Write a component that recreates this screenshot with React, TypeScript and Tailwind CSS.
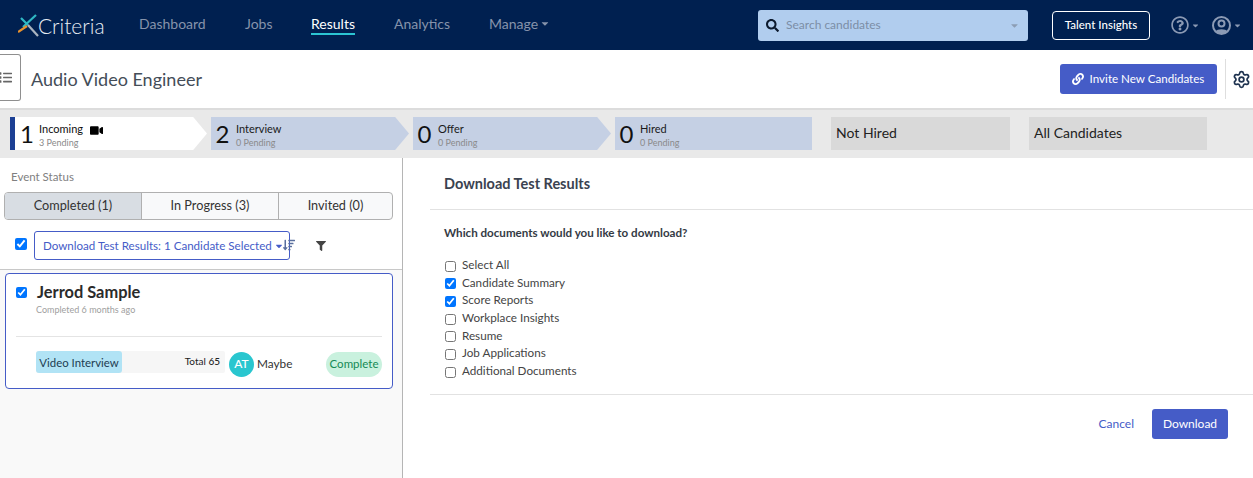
import React from 'react';
import {
  FaCaretDown,
  FaFilter,
  FaLink,
  FaList,
  FaRegQuestionCircle,
  FaSearch,
  FaSortAmountDown,
  FaVideo,
} from 'react-icons/fa';
import { Settings } from 'lucide-react';

const navItems = [
  { label: 'Dashboard', cls: 'w-[106px]' },
  { label: 'Jobs', cls: 'w-[66px]' },
  { label: 'Results', cls: 'w-[83px]', active: true },
  { label: 'Analytics', cls: 'w-[95px]' },
];

const steps = [
  { n: '2', label: 'Interview' },
  { n: '0', label: 'Offer' },
];

const documents = [
  { label: 'Select All', checked: false, h: 'h-[18px]' },
  { label: 'Candidate Summary', checked: true, h: 'h-[17px]' },
  { label: 'Score Reports', checked: true, h: 'h-[18px]' },
  { label: 'Workplace Insights', checked: false, h: 'h-[18px]' },
  { label: 'Resume', checked: false, h: 'h-[17px]' },
  { label: 'Job Applications', checked: false, h: 'h-[18px]' },
  { label: 'Additional Documents', checked: false, h: 'h-[18px]' },
];

function Logo() {
  return (
    <div className="flex items-center w-[139px] pl-[18px]">
      <svg width="21" height="24" viewBox="0 0 21 24" fill="none" className="shrink-0">
        <path d="M5 14 L18 2" stroke="#2fb8c4" strokeWidth="2.2" />
        <path d="M3 5 L10 12" stroke="#2fb8c4" strokeWidth="2.2" />
        <path d="M0 19 L9 13" stroke="#e8912d" strokeWidth="2.2" />
        <path d="M10 12 L20 23" stroke="#aab4c0" strokeWidth="2.2" />
      </svg>
      <span className="text-[21px] font-light text-[#e8eef5] leading-none -ml-[1px]">Criteria</span>
    </div>
  );
}

function UserIcon() {
  return (
    <svg width="19" height="19" viewBox="0 0 19 19" fill="none">
      <circle cx="9.5" cy="9.5" r="8.5" stroke="#8b9ab4" strokeWidth="2" />
      <circle cx="9.5" cy="7.5" r="3" stroke="#8b9ab4" strokeWidth="2" fill="#002050" />
      <path d="M3.5 15.5 C5 12.5 14 12.5 15.5 15.5 L12 18 H7 Z" fill="#8b9ab4" />
    </svg>
  );
}

function Navbar() {
  return (
    <nav className="h-[50px] bg-[#002050] flex items-center shrink-0">
      <Logo />
      <ul className="flex items-center -mt-[1px] text-[14px] text-[#8693ab]">
        {navItems.map((item) => (
          <li key={item.label} className={`flex ${item.cls}`}>
            <span className={item.active ? 'text-white border-b-2 border-[#2cc5d2] leading-[19px]' : 'border-b-2 border-transparent leading-[19px]'}>
              {item.label}
            </span>
          </li>
        ))}
        <li className="flex items-center gap-[3px] w-[60px] pb-[2px] leading-[19px]">
          Manage
          <FaCaretDown className="text-[11px]" />
        </li>
      </ul>
      <div className="ml-[209px] w-[270px] h-[31px] bg-[#b1cdee] rounded-[3px] flex items-center pl-[8px] pr-[8px]">
        <FaSearch className="text-[13px] text-[#0c1a2e]" />
        <span className="ml-[7px] text-[12px] text-[#7c8ea6] flex-1">Search candidates</span>
        <FaCaretDown className="text-[11px] text-[#8c9db4]" />
      </div>
      <button className="ml-[24px] w-[98px] h-[29px] border border-white rounded-[4px] text-white text-[11.5px] font-medium">
        Talent Insights
      </button>
      <div className="ml-[21px] flex items-center gap-[2px] text-[#8b9ab4]">
        <FaRegQuestionCircle className="text-[18px]" />
        <FaCaretDown className="text-[9px]" />
      </div>
      <div className="ml-[12px] flex items-center gap-[2px] text-[#8b9ab4]">
        <UserIcon />
        <FaCaretDown className="text-[9px]" />
      </div>
    </nav>
  );
}

function PageHeader() {
  return (
    <header className="h-[60px] bg-white border-b-2 border-[#dcdcdc] flex items-center shrink-0">
      <div className="w-[21px] h-[47px] -mt-[4px] border border-l-0 border-[#8f8f8f] rounded-r-[3px] flex items-center justify-end pr-[8px] overflow-hidden">
        <FaList className="text-[13px] text-[#666] shrink-0" />
      </div>
      <h1 className="ml-[10px] text-[18px] text-[#444d58] flex-1">Audio Video Engineer</h1>
      <button className="w-[157px] h-[30px] -mt-[1px] bg-[#455cc7] rounded-[3px] text-white text-[11.6px] flex items-center justify-center gap-[6px] pr-[1px]">
        <FaLink className="text-[12px]" />
        Invite New Candidates
      </button>
      <div className="ml-[8px] w-px h-[40px] -mt-[1px] bg-[#dedede]" />
      <Settings size={19} strokeWidth={2.2} className="ml-[6px] mr-[2px] text-[#1f3350]" />
    </header>
  );
}

function StepLabel({ n, label }: { n: string; label: string }) {
  return (
    <>
      <span className="text-[24px] leading-none text-[#111] w-[19px] text-center shrink-0">{n}</span>
      <div className="ml-[4px] pt-[4px]">
        <div className="text-[11px] text-[#1a1a1a] leading-[14px]">{label}</div>
        <div className="text-[9px] text-[#8a8a8a] leading-[13px]">0 Pending</div>
      </div>
    </>
  );
}

function StageBar() {
  return (
    <div className="h-[48px] bg-[#e9e9e9] flex items-start pt-[7px] pl-[10px] shrink-0">
      <div className="w-[197px] h-[33px] bg-white border-l-[5px] border-[#1c3f94] flex items-center pl-[5px] mr-[4px] [clip-path:polygon(0_0,93%_0,100%_50%,93%_100%,0_100%)]">
        <span className="text-[24px] leading-none text-[#111] w-[10px] text-center shrink-0">1</span>
        <div className="ml-[9px] pt-[4px]">
          <div className="flex items-center h-[14px] text-[11px] text-[#111] leading-[14px]">
            Incoming
            <FaVideo className="ml-[7px] mt-[3px] text-[13px] text-black" />
          </div>
          <div className="text-[9px] text-[#8a8a8a] leading-[13px]">3 Pending</div>
        </div>
      </div>
      {steps.map((s) => (
        <div
          key={s.label}
          className="w-[198px] mr-[4px] h-[33px] bg-[#c5d0e4] flex items-center pl-[2px] [clip-path:polygon(0_0,93%_0,100%_50%,93%_100%,0_100%)]"
        >
          <StepLabel n={s.n} label={s.label} />
        </div>
      ))}
      <div className="w-[197px] h-[33px] bg-[#c5d0e4] flex items-center pl-[2px]">
        <StepLabel n="0" label="Hired" />
      </div>
      <div className="ml-[19px] w-[179px] h-[33px] bg-[#d9d9d9] flex items-center pl-[5px] pb-[2px] text-[14px] text-[#222]">
        Not Hired
      </div>
      <div className="ml-[19px] w-[178px] h-[33px] bg-[#d9d9d9] flex items-center pl-[5px] pb-[2px] text-[14px] text-[#222]">
        All Candidates
      </div>
    </div>
  );
}

function CandidateCard() {
  return (
    <div className="mx-[5px] mt-[3px] h-[116px] w-[388px] bg-white border border-[#455cc7] rounded-[4px] pl-[10px] pr-[10px]">
      <div className="flex items-center h-[34px] mt-[1px]">
        <input type="checkbox" checked readOnly className="w-[11px] h-[11px]" />
        <span className="ml-[10px] text-[16.4px] font-bold text-[#2b2b2b]">Jerrod Sample</span>
      </div>
      <div className="ml-[20px] text-[9px] text-[#a0a0a0] leading-[12px] -mt-[5px]">Completed 6 months ago</div>
      <div className="mt-[20px] h-px bg-[#e4e4e4]" />
      <div className="flex items-center mt-[14px] h-[26px]">
        <div className="ml-[20px] w-[189px] h-[22px] bg-[#f6f6f6] flex items-center justify-between -mt-[4px] pr-[5px] rounded-[2px]">
          <span className="h-[22px] w-[86px] bg-[#b1e3f5] rounded-[3px] flex items-center justify-center pt-[1px] text-[11.4px] text-[#1d3c52]">
            Video Interview
          </span>
          <span className="text-[10px] text-[#222] -mt-[1px]">
            Total <span className="font-medium">65</span>
          </span>
        </div>
        <span className="ml-[4px] w-[25px] h-[25px] rounded-full bg-[#29c6cf] text-white text-[12px] font-medium flex items-center justify-center shrink-0">
          AT
        </span>
        <span className="ml-[3px] text-[11.8px] text-[#333]">Maybe</span>
        <span className="ml-auto w-[56px] h-[25px] rounded-full bg-[#c9f1de] text-[#148a55] text-[11.5px] flex items-center justify-center">
          Complete
        </span>
      </div>
    </div>
  );
}

function LeftPanel() {
  return (
    <aside className="w-[403px] border-r border-[#b5b5b5] bg-[#f9f9f9] shrink-0">
      <div className="bg-white h-[112px] border-b border-[#c8c8c8]">
        <div className="pl-[11px] pt-[12px] text-[11.5px] leading-[14px] text-[#808080]">Event Status</div>
        <div className="mx-[4px] mt-[8px] w-[389px] h-[28px] flex border border-[#b0b0b0] rounded-[4px] bg-[#f8f9fa] text-[12.7px] text-[#333]">
          <div className="w-[137px] bg-[#d8dde3] border-r border-[#b0b0b0] rounded-l-[3px] flex items-center justify-center">
            Completed (1)
          </div>
          <div className="w-[137px] border-r border-[#b0b0b0] flex items-center justify-center">In Progress (3)</div>
          <div className="flex-1 flex items-center justify-center">Invited (0)</div>
        </div>
        <div className="flex items-center mt-[11px] pl-[15px]">
          <input type="checkbox" checked readOnly className="w-[12px] h-[12px] -mt-[3px]" />
          <div className="relative ml-[7px] w-[256px] h-[29px] border border-[#455cc7] rounded-[3px] bg-white flex items-center pl-[8px] text-[11.6px] text-[#455cc7]">
            Download Test Results: 1 Candidate Selected
            <FaCaretDown className="ml-[2px] text-[10px]" />
            <FaSortAmountDown className="absolute left-[248px] top-[7px] text-[12px] text-[#5a6f9e]" />
          </div>
          <FaFilter className="ml-[26px] text-[10px] text-[#444]" />
        </div>
      </div>
      <CandidateCard />
    </aside>
  );
}

function RightPanel() {
  return (
    <main className="flex-1 bg-white pl-[27px]">
      <div className="h-[52px] border-b border-[#e2e2e2] flex items-center pl-[14px] text-[14.5px] font-bold text-[#3a4250]">
        Download Test Results
      </div>
      <div className="pl-[14px] pt-[15px] text-[11.6px] font-bold text-[#343a44] leading-[16px]">
        Which documents would you like to download?
      </div>
      <div className="pl-[15px] mt-[15px] pb-[14px] border-b border-[#e2e2e2]">
        {documents.map((doc) => (
          <label key={doc.label} className={`flex items-center ${doc.h} text-[11.7px] text-[#444]`}>
            <input type="checkbox" checked={doc.checked} readOnly className="w-[11px] h-[11px] mt-[2px]" />
            <span className="ml-[6px]">{doc.label}</span>
          </label>
        ))}
      </div>
      <div className="flex items-center justify-end mt-[14px] pr-[25px]">
        <span className="text-[12px] text-[#455cc7]">Cancel</span>
        <button className="ml-[18px] w-[76px] h-[30px] bg-[#455cc7] rounded-[3px] text-white text-[12px]">Download</button>
      </div>
    </main>
  );
}

export default function App() {
  return (
    <div className="h-[478px] w-[1253px] overflow-hidden flex flex-col bg-white font-['Lato',sans-serif]">
      <Navbar />
      <PageHeader />
      <StageBar />
      <div className="flex flex-1 min-h-0">
        <LeftPanel />
        <RightPanel />
      </div>
    </div>
  );
}
